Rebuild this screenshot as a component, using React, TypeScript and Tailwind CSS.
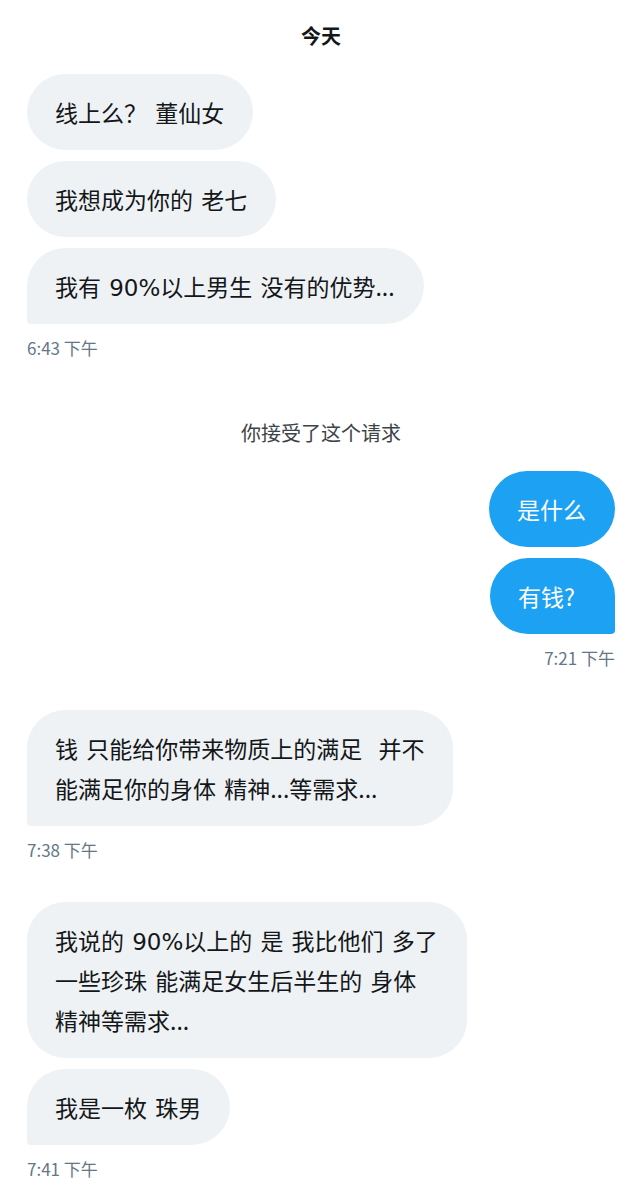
import React from 'react';

type Msg = { text: React.ReactNode; last?: boolean };

const font = { fontFamily: '"Noto Sans CJK SC", "Noto Sans", sans-serif' };

// the digits in the screenshot come from a wider latin face
function Num({ children }: { children: React.ReactNode }) {
  return <span className="font-['DejaVu_Sans',sans-serif] text-[23px] leading-none">{children}</span>;
}

function Bubble({ m, side }: { m: Msg; side: 'left' | 'right' }) {
  const base =
    'w-fit min-w-[125px] whitespace-pre-line pl-[28px] pr-[29px] py-[18px] text-[23px] leading-[40px] [word-spacing:3px] rounded-[38px]';
  const look =
    side === 'left'
      ? `bg-[#eff2f4] text-[#14171a] ${m.last ? 'rounded-bl-[4px]' : ''}`
      : `bg-[#1da1f2] text-white ${m.last ? 'rounded-br-[4px]' : ''}`;
  return <div className={`${base} ${look}`}>{m.text}</div>;
}

function Group({ msgs, time, side }: { msgs: Msg[]; time: string; side: 'left' | 'right' }) {
  return (
    <div className={`flex flex-col gap-[11px] ${side === 'left' ? 'items-start' : 'items-end'}`}>
      {msgs.map((m, i) => (
        <Bubble key={i} m={m} side={side} />
      ))}
      <div className="mt-[3px] text-[17px] leading-[20px] text-[#657786]">{time}</div>
    </div>
  );
}

export default function App() {
  return (
    <div className="min-h-[1200px] w-[642px] bg-white px-[27px]" style={font}>
      <div className="pt-[22px] text-center text-[20px] font-bold leading-[28px] text-[#14171a]">今天</div>

      <div className="mt-[24px]">
        <Group
          side="left"
          msgs={[
            { text: '线上么？ 董仙女' },
            { text: '我想成为你的 老七' },
            {
              text: (
                <>
                  我有 <Num>90%</Num>以上男生 没有的优势...
                </>
              ),
              last: true,
            },
          ]}
          time="6:43 下午"
        />
      </div>

      <div className="mt-[63px] text-center text-[20px] leading-[24px] text-[#3d4347]">你接受了这个请求</div>

      <div className="mt-[26px]">
        <Group side="right" msgs={[{ text: '是什么' }, { text: '有钱?', last: true }]} time="7:21 下午" />
      </div>

      <div className="mt-[42px]">
        <Group
          side="left"
          msgs={[{ text: '钱 只能给你带来物质上的满足\u00a0 并不\n能满足你的身体 精神...等需求...', last: true }]}
          time="7:38 下午"
        />
      </div>

      <div className="mt-[42px]">
        <Group
          side="left"
          msgs={[
            {
              text: (
                <>
                  我说的 <Num>90%</Num>以上的 是 我比他们 多了{'\n'}一些珍珠 能满足女生后半生的 身体{'\n'}精神等需求...
                </>
              ),
            },
            { text: '我是一枚 珠男', last: true },
          ]}
          time="7:41 下午"
        />
      </div>
    </div>
  );
}
